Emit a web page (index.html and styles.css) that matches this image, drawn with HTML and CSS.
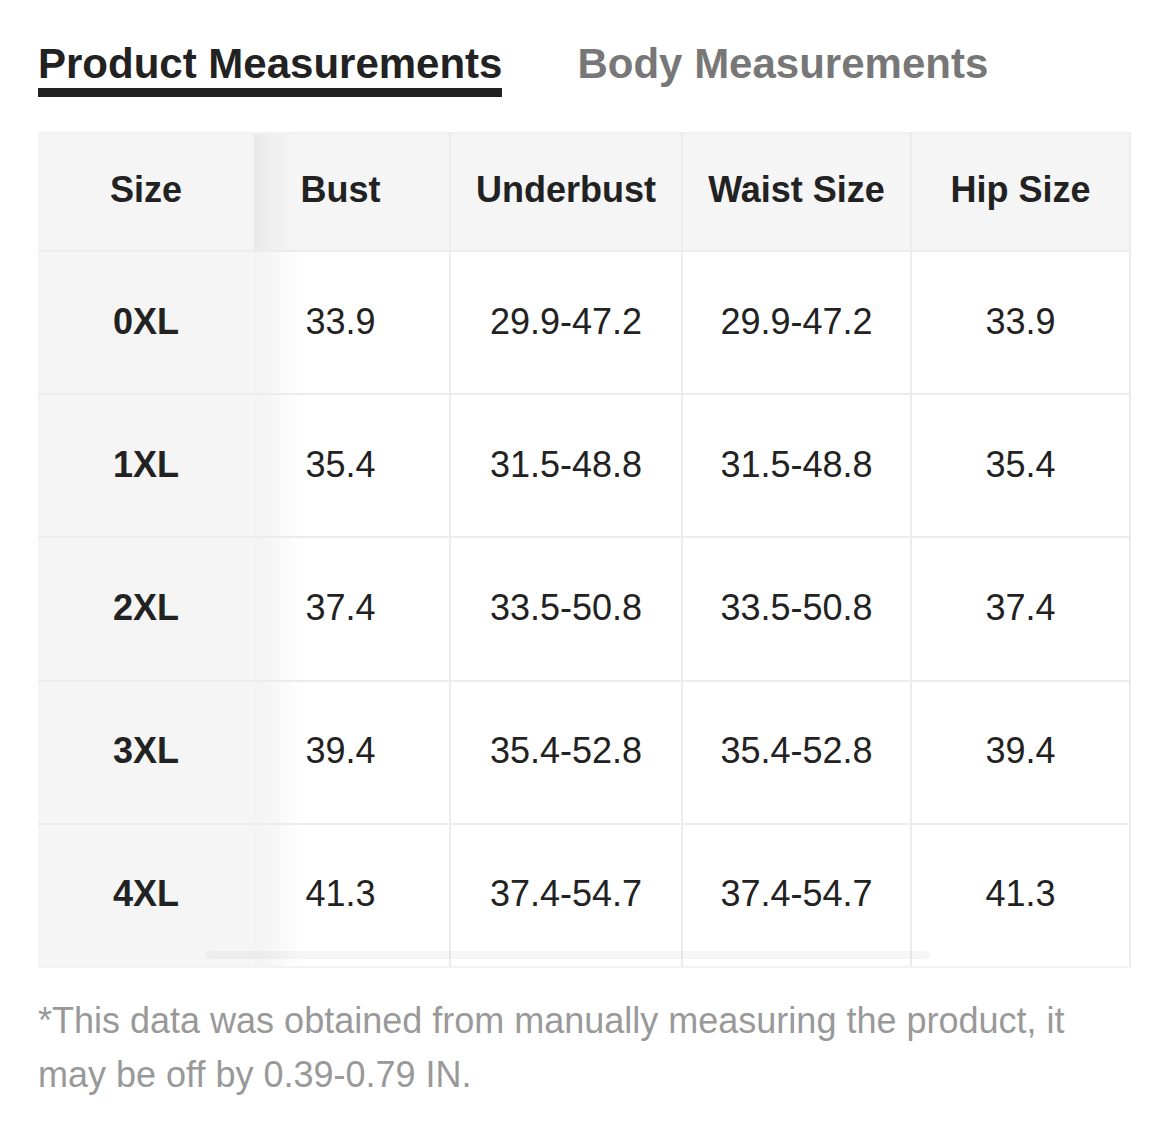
FILE: index.html
```html
<!DOCTYPE html>
<html>
<head>
<meta charset="utf-8">
<link rel="stylesheet" href="styles.css">
</head>
<body>
<div class="page">
  <div class="tabs">
    <div class="tab active">Product Measurements</div>
    <div class="tab">Body Measurements</div>
  </div>
  <div class="table-wrap">
    <table class="sizes">
      <colgroup>
        <col class="c-size"><col class="c-bust"><col class="c-under"><col class="c-waist"><col class="c-hip">
      </colgroup>
      <thead>
        <tr><th class="first">Size</th><th class="bust">Bust</th><th>Underbust</th><th>Waist Size</th><th>Hip Size</th></tr>
      </thead>
      <tbody>
        <tr><td class="first">0XL</td><td class="bust">33.9</td><td>29.9-47.2</td><td>29.9-47.2</td><td>33.9</td></tr>
        <tr><td class="first">1XL</td><td class="bust">35.4</td><td>31.5-48.8</td><td>31.5-48.8</td><td>35.4</td></tr>
        <tr><td class="first">2XL</td><td class="bust">37.4</td><td>33.5-50.8</td><td>33.5-50.8</td><td>37.4</td></tr>
        <tr><td class="first">3XL</td><td class="bust">39.4</td><td>35.4-52.8</td><td>35.4-52.8</td><td>39.4</td></tr>
        <tr><td class="first">4XL</td><td class="bust">41.3</td><td>37.4-54.7</td><td>37.4-54.7</td><td>41.3</td></tr>
      </tbody>
    </table>
    <div class="scrollbar"></div>
  </div>
  <p class="note">*This data was obtained from manually measuring the product, it may be off by 0.39-0.79 IN.</p>
</div>
</body>
</html>
```

FILE: styles.css
```css
* { box-sizing: border-box; }
html, body { margin: 0; padding: 0; background: #fff; }
body { font-family: "Liberation Sans", Arial, Helvetica, sans-serif; color: #222; }

.page { padding: 40px 40px 0 38px; width: 1170px; }

.tabs { display: flex; gap: 75px; align-items: flex-start; }
.tab {
  font-size: 42px;
  font-weight: bold;
  line-height: 48px;
  color: #777;
  padding-bottom: 9px;
}
.tab.active {
  color: #222;
  border-bottom: 9px solid #222;
  padding-bottom: 0;
}

.table-wrap { position: relative; margin-top: 35px; width: 1092px; }

.sizes {
  border-collapse: collapse;
  table-layout: fixed;
  width: 1092px;
  font-size: 36px;
}
.c-size { width: 216px; }
.c-bust { width: 196px; }
.c-under { width: 232px; }
.c-waist { width: 229px; }
.c-hip { width: 219px; }

.sizes th, .sizes td {
  text-align: center;
  padding: 0;
  border: 2px solid #ececec;
}
.sizes th {
  height: 118px;
  padding-bottom: 4px;
  background: #f5f5f5;
  font-weight: bold;
  border-top-color: #f2f2f2;
  color: #222;
}
.sizes td {
  height: 143.2px;
  padding-bottom: 2px;
  background: #fff;
  font-weight: normal;
  color: #222;
}
.sizes .first {
  background: #f5f5f5;
  font-weight: bold;
  border-left: none;
  border-right: none;
}
.sizes th:last-child, .sizes td:last-child { border-right: 2px solid #ececec; }
.sizes .bust {
  padding-right: 22px;
  border-left: none;
}
.sizes td.bust {
  background: linear-gradient(to right, #f3f3f3 0px, #f7f7f7 20px, #ffffff 48px);
}
.sizes th.bust {
  background: linear-gradient(to right, #e9e9e9 0px, #f0f0f0 18px, #f5f5f5 44px);
}
.sizes tbody tr:last-child td { border-bottom: 2px solid #f2f2f2; }

.scrollbar {
  position: absolute;
  left: 168px;
  width: 724px;
  bottom: 9px;
  height: 8px;
  border-radius: 4px;
  background: rgba(0, 0, 0, 0.035);
}

.note {
  margin: 26px 0 0 0;
  font-size: 36px;
  line-height: 54px;
  color: #999;
  width: 1060px;
}
```
